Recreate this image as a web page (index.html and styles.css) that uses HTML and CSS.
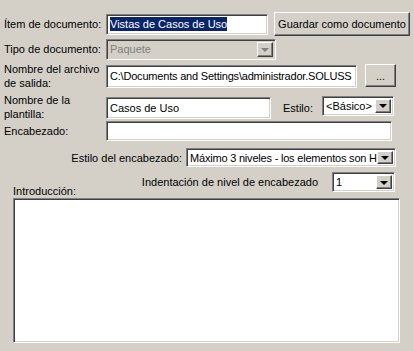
FILE: index.html
```html
<!DOCTYPE html>
<html>
<head>
<meta charset="utf-8">
<link rel="stylesheet" href="styles.css">
</head>
<body>
<div class="form">
  <div class="row r1">
    <div class="label">Ítem de documento:</div>
    <div class="field w-item"><span class="sel">Vistas de Casos de Uso</span></div>
    <div class="btn btn-save">Guardar como documento</div>
  </div>
  <div class="row r2">
    <div class="label">Tipo de documento:</div>
    <div class="combo disabled w-tipo"><span class="val">Paquete</span><span class="arrow"><span class="tri"></span></span></div>
  </div>
  <div class="row r3">
    <div class="label two">Nombre del archivo<br>de salida:</div>
    <div class="field w-file tight">C:\Documents and Settings\administrador.SOLUSS</div>
    <div class="btn btn-dots">...</div>
  </div>
  <div class="row r4">
    <div class="label two">Nombre de la<br>plantilla:</div>
    <div class="field w-plant">Casos de Uso</div>
    <div class="lbl-estilo">Estilo:</div>
    <div class="combo w-estilo"><span class="val">&lt;Básico&gt;</span><span class="arrow"><span class="tri"></span></span></div>
  </div>
  <div class="row r5">
    <div class="label">Encabezado:</div>
    <div class="field w-enc"></div>
  </div>
  <div class="row r6">
    <div class="lbl-right l-estenc">Estilo del encabezado:</div>
    <div class="combo w-estenc"><span class="val tight">Máximo 3 niveles - los elementos son H</span><span class="arrow"><span class="tri"></span></span></div>
  </div>
  <div class="row r7">
    <div class="lbl-intro">Introducción:</div>
    <div class="indent">
      <div class="lbl-right l-indent">Indentación de nivel de encabezado</div>
      <div class="combo w-indent"><span class="val">1</span><span class="arrow"><span class="tri"></span></span></div>
    </div>
  </div>
  <div class="textarea"></div>
</div>
</body>
</html>
```

FILE: styles.css
```css
* { box-sizing: border-box; }
html, body {
  margin: 0;
  padding: 0;
  background: #d4d0c8;
  width: 413px;
  height: 351px;
  overflow: hidden;
  font-family: "Liberation Sans", Arial, sans-serif;
  font-size: 11px;
  color: #000;
}
.form {
  padding: 12px 0 0 4px;
}
.row {
  display: flex;
  align-items: center;
}
.label {
  width: 102px;
  flex: none;
  line-height: 14px;
  white-space: nowrap;
}
.field {
  flex: none;
  background: #fff;
  border: 1px solid;
  border-color: #808080 #fff #fff #808080;
  box-shadow: inset 1px 1px #404040, inset -1px -1px #d4d0c8;
  padding: 0 2px 0 3px;
  display: flex;
  align-items: center;
  white-space: nowrap;
  overflow: hidden;
}
.tight { letter-spacing: -0.2px; }
.sel {
  background: #0a246a;
  color: #fff;
  line-height: 14px;
}
.btn {
  flex: none;
  display: flex;
  align-items: center;
  justify-content: center;
  white-space: nowrap;
  border: 1px solid;
  border-color: #fff #404040 #404040 #fff;
  box-shadow: inset -1px -1px #808080, inset 1px 1px #d4d0c8;
  background: #d4d0c8;
}
.combo {
  flex: none;
  display: flex;
  align-items: stretch;
  background: #fff;
  border: 1px solid;
  border-color: #808080 #fff #fff #808080;
  box-shadow: inset 1px 1px #404040, inset -1px -1px #d4d0c8;
  padding: 2px;
}
.combo .val {
  flex: 1;
  padding-left: 1px;
  display: flex;
  align-items: center;
  white-space: nowrap;
  overflow: hidden;
}
.combo .arrow {
  flex: none;
  width: 16px;
  display: flex;
  align-items: center;
  justify-content: center;
  background: #d4d0c8;
  border: 1px solid;
  border-color: #fff #404040 #404040 #fff;
  box-shadow: inset -1px -1px #808080, inset 1px 1px #d4d0c8;
}
.tri {
  width: 0;
  height: 0;
  border-left: 4px solid transparent;
  border-right: 4px solid transparent;
  border-top: 4px solid #000;
  margin-top: 1px;
}
.combo.disabled {
  background: #d4d0c8;
}
.combo.disabled .val { color: #808080; }
.combo.disabled .tri { border-top-color: #808080; }

.r1 { height: 24px; }
.w-item { width: 162px; height: 21px; }
.btn-save { width: 136px; height: 24px; margin-left: 6px; }

.r2 { height: 22px; margin-top: 2px; }
.w-tipo { width: 170px; height: 21px; }

.r3 { height: 28px; margin-top: 2px; }
.w-file { width: 251px; height: 23px; }
.btn-dots { width: 31px; height: 23px; margin-left: 8px; margin-top: -1px; }

.r4 { height: 26px; margin-top: 4px; }
.w-plant { width: 165px; height: 22px; margin-top: 1px; }
.lbl-estilo { margin-left: 12px; width: 39px; white-space: nowrap; margin-top: 1px; }
.w-estilo { width: 72px; height: 20px; margin-top: -3px; }

.r5 { height: 22px; margin-top: 0; }
.w-enc { width: 286px; height: 20px; }

.r6 { height: 21px; margin-top: 5px; }
.lbl-right { text-align: right; white-space: nowrap; }
.l-estenc { width: 178px; }
.w-estenc { width: 210px; height: 19px; margin-left: 4px; }

.r7 { height: 26px; margin-top: 4px; justify-content: space-between; align-items: flex-start; width: 391px; }
.lbl-intro { padding-left: 9px; margin-top: 13px; }
.indent { display: flex; align-items: center; height: 20px; }
.l-indent { margin-right: 14px; }
.w-indent { width: 63px; height: 20px; }

.textarea {
  margin-left: 9px;
  width: 387px;
  height: 145px;
  background: #fff;
  border: 1px solid;
  border-color: #808080 #fff #fff #808080;
  box-shadow: inset 1px 1px #404040, inset -1px -1px #d4d0c8;
}
```
